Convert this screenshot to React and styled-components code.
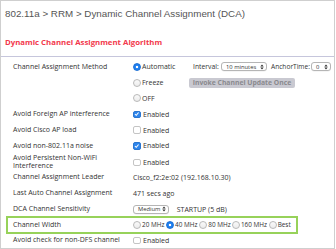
import React from 'react'
import styled, { createGlobalStyle } from 'styled-components'

const GlobalStyle = createGlobalStyle`
  html, body { margin: 0; padding: 0; background: #fff; }
  body { font-family: "Open Sans", "DejaVu Sans", sans-serif; }
`

const Panel = styled.div`
  width: 335px;
  height: 249px;
  box-sizing: border-box;
  border: 1px solid #cfcfcf;
  overflow: hidden;
  background: #fff;
`
const Crumb = styled.div`
  font-family: "Liberation Sans", Arial, sans-serif;
  font-size: 9.8px;
  color: #555;
  padding: 7px 0 0 4px;
  height: 26px;
  box-sizing: border-box;
`
const Heading = styled.div`
  font-weight: bold;
  font-size: 7.8px;
  color: #f2384c;
  padding-left: 4px;
  height: 30px;
  line-height: 30px;
  box-sizing: border-box;
  border-bottom: 1px solid #c6c6dc;
`
const Form = styled.div`
  padding-top: 2px;
`
const Row = styled.div`
  display: grid;
  grid-template-columns: 120px 1fr;
  align-items: center;
  height: ${({ h }) => h || 15.8}px;
  padding-left: 12px;
  font-size: 7px;
  color: #333;
  box-sizing: border-box;
  ${({ hl }) => hl && `
    margin: -1px 0 0 4.7px;
    width: 292.3px;
    padding-left: 5.3px;
    border: 2px solid #97d25a;
    height: 18px;
  `}
`
const Label = styled.div`
  line-height: 8.6px;
`
const Value = styled.div`
  display: flex;
  align-items: center;
  white-space: nowrap;
`
const RadioDot = styled.span`
  width: 8px;
  height: 8px;
  border-radius: 50%;
  box-sizing: border-box;
  flex: none;
  margin-right: 1px;
  ${({ on }) => on ? `
    background: radial-gradient(circle, #fff 0 1.3px, #1f7ff0 1.6px);
    border: 1px solid #1a6fd6;
  ` : `
    background: linear-gradient(#fafafa, #ececec);
    border: 1px solid #b9b9b9;
  `}
`
const Box = styled.span`
  width: 7.5px;
  height: 7.5px;
  border-radius: 2px;
  box-sizing: border-box;
  flex: none;
  margin-right: 2.5px;
  display: inline-flex;
  align-items: center;
  justify-content: center;
  ${({ on }) => on ? `
    background: #2f86ec;
    border: 1px solid #2a76d0;
  ` : `
    background: #fff;
    border: 1px solid #c4c4c4;
  `}
`
const Select = styled.span`
  display: inline-flex;
  align-items: center;
  justify-content: space-between;
  flex: none;
  width: ${({ w }) => w}px;
  height: 9px;
  padding: 0 2px 0 4px;
  box-sizing: border-box;
  border: 1px solid #b5b5b5;
  border-radius: 3px;
  background: #fff;
  font-size: 5.8px;
  box-shadow: 0 0.5px 0 rgba(0,0,0,0.08);
  svg { flex: none; }
`
const Cell = styled.span`
  display: inline-flex;
  align-items: center;
  flex: none;
  width: ${({ w }) => (w ? `${w}px` : 'auto')};
  font-size: ${({ fs }) => (fs ? `${fs}px` : 'inherit')};
`
const InvokeBtn = styled.span`
  width: 106px;
  height: 10px;
  display: inline-flex;
  align-items: center;
  justify-content: center;
  background: #c9c9d1;
  border-radius: 2px;
  color: #8a8a8e;
  font-weight: bold;
  font-size: 6.8px;
`

const Arrows = () => (
  <svg width="4" height="6" viewBox="0 0 4 6">
    <path d="M0.3 2.4 L2 0.4 L3.7 2.4 Z M0.3 3.6 L2 5.6 L3.7 3.6 Z" fill="#333" />
  </svg>
)

const Tick = () => (
  <svg width="6" height="6" viewBox="0 0 6 6">
    <path d="M1 3.1 L2.5 4.5 L5 1.3" stroke="#fff" strokeWidth="1.1" fill="none" />
  </svg>
)

const Radio = ({ on, w, fs, children }) => (
  <Cell w={w} fs={fs}><RadioDot on={on ? 1 : 0} />{children}</Cell>
)
const Check = ({ on }) => (
  <Value><Box on={on ? 1 : 0}>{on && <Tick />}</Box>Enabled</Value>
)

export default function App() {
  return (
    <>
      <GlobalStyle />
      <Panel>
        <Crumb>802.11a &gt; RRM &gt; Dynamic Channel Assignment (DCA)</Crumb>
        <Heading>Dynamic Channel Assignment Algorithm</Heading>
        <Form>
          <Row>
            <Label>Channel Assignment Method</Label>
            <Value>
              <Radio on w={60}>Automatic</Radio>
              <Cell w={28} fs={6.8}>Interval:</Cell>
              <Select w={46}>10 minutes <Arrows /></Select>
              <Cell w={40} fs={6.6} style={{ marginLeft: 4 }}>AnchorTime:</Cell>
              <Select w={20}>0 <Arrows /></Select>
            </Value>
          </Row>
          <Row>
            <Label />
            <Value>
              <Radio w={56}>Freeze</Radio>
              <InvokeBtn>Invoke Channel Update Once</InvokeBtn>
            </Value>
          </Row>
          <Row>
            <Label />
            <Value><Radio>OFF</Radio></Value>
          </Row>
          <Row>
            <Label>Avoid Foreign AP interference</Label>
            <Check on />
          </Row>
          <Row>
            <Label>Avoid Cisco AP load</Label>
            <Check />
          </Row>
          <Row>
            <Label>Avoid non-802.11a noise</Label>
            <Check on />
          </Row>
          <Row>
            <Label>Avoid Persistent Non-WiFi<br />Interference</Label>
            <Check />
          </Row>
          <Row>
            <Label>Channel Assignment Leader</Label>
            <Value>Cisco_f2:2e:02 (192.168.10.30)</Value>
          </Row>
          <Row>
            <Label>Last Auto Channel Assignment</Label>
            <Value>471 secs ago</Value>
          </Row>
          <Row>
            <Label>DCA Channel Sensitivity</Label>
            <Value>
              <Select w={36}>Medium <Arrows /></Select>
              <Cell style={{ marginLeft: 7.7 }}>STARTUP (5 dB)</Cell>
            </Value>
          </Row>
          <Row hl={1}>
            <Label>Channel Width</Label>
            <Value>
              <Radio w={33} fs={6.4}>20 MHz</Radio>
              <Radio on w={33.3} fs={6.4}>40 MHz</Radio>
              <Radio w={32.7} fs={6.4}>80 MHz</Radio>
              <Radio w={36.7} fs={6.4}>160 MHz</Radio>
              <Radio fs={6.4}>Best</Radio>
            </Value>
          </Row>
          <Row h={13}>
            <Label>Avoid check for non-DFS channel</Label>
            <Check />
          </Row>
        </Form>
      </Panel>
    </>
  )
}
